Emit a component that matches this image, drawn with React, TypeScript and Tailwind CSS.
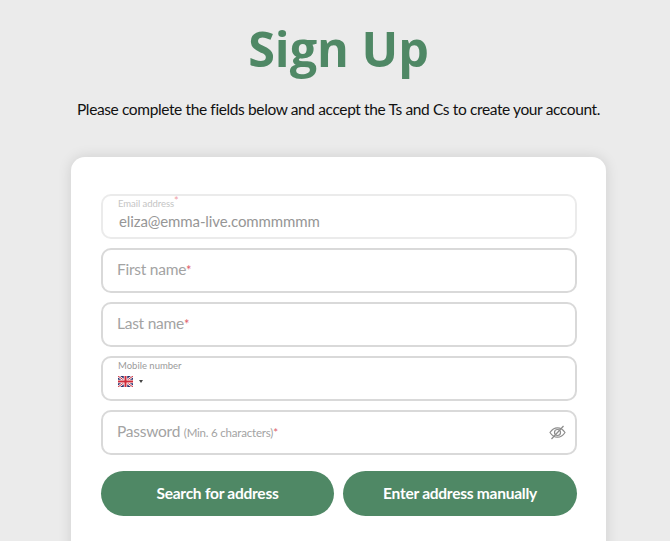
import React from "react";

function UkFlag() {
  return (
    <svg width="15" height="11" viewBox="0 0 60 44" className="block">
      <rect width="60" height="44" fill="#2b2f6b" />
      <path d="M0 0L60 44M60 0L0 44" stroke="#fff" strokeWidth="10" />
      <path d="M0 0L60 44M60 0L0 44" stroke="#cf2b3a" strokeWidth="4" />
      <path d="M30 0V44M0 22H60" stroke="#fff" strokeWidth="14" />
      <path d="M30 0V44M0 22H60" stroke="#cf2b3a" strokeWidth="8" />
    </svg>
  );
}

function EyeSlash() {
  return (
    <svg width="17" height="15" viewBox="0 0 17 15" fill="none" stroke="#8c8c8c" strokeWidth="1.2" className="block">
      <path d="M1 7.5C3 4.4 5.6 2.8 8.5 2.8S14 4.4 16 7.5C14 10.6 11.4 12.2 8.5 12.2S3 10.6 1 7.5Z" />
      <circle cx="8.5" cy="7.5" r="3" />
      <path d="M2.5 14L14.5 1" />
    </svg>
  );
}

const fieldCls =
  "relative h-[45px] rounded-[10px] border-2 border-[#d9d9d9] bg-white";

const inputText = "text-[15.5px] tracking-[-0.25px] text-[#a3a3a3]";

function PlainField({ label }: { label: string }) {
  return (
    <div className={`${fieldCls} flex items-center pb-[2px] pl-[14px]`}>
      <span className={inputText}>
        {label}
        <span className="text-[13px] text-[#e0606c]">*</span>
      </span>
    </div>
  );
}

export default function App() {
  return (
    <div className="h-[541px] overflow-hidden bg-[#ebebeb] font-['Lato',sans-serif]">
      <div className="ml-[71px] w-[535px]">
        <h1 className="pt-[17px] text-center font-['Open_Sans',sans-serif] text-[48.5px] font-bold leading-[62px] text-[#4f8865]">
          Sign Up
        </h1>
        <p className="mt-[18px] whitespace-nowrap text-center text-[15.5px] leading-[24px] tracking-[-0.38px] text-[#111111]">
          Please complete the fields below and accept the Ts and Cs to create your account.
        </p>
      </div>
      <div className="ml-[71px] mt-[36px] w-[535px] rounded-t-[14px] bg-white pb-[40px] pl-[30px] pr-[29px] pt-[37px] shadow-[0_0_14px_rgba(0,0,0,0.12)]">
        <div className="flex flex-col gap-[9px]">
          <div className="relative h-[45px] rounded-[10px] border-2 border-[#ebebeb] bg-white pl-[16px]">
            <div className="mt-[1px] text-[9.5px] leading-[12px] tracking-[-0.05px] text-[#c4c4c4]">
              <span className="-ml-[1px]">Email address</span>
              <span className="relative top-[-2px] text-[11px] text-[#f0a0a8]">*</span>
            </div>
            <div className="mt-[1px] text-[15px] leading-[20px] tracking-[-0.1px] text-[#969696]">
              eliza@emma-live.commmmmm
            </div>
          </div>
          <PlainField label="First name" />
          <PlainField label="Last name" />
          <div className={`${fieldCls} pl-[15px]`}>
            <div className="mt-[2px] text-[9.5px] leading-[12px] text-[#9b9b9b]">Mobile number</div>
            <div className="mt-[4px] flex items-center gap-[6px]">
              <UkFlag />
              <span className="h-0 w-0 border-x-[2.5px] border-t-[3px] border-x-transparent border-t-[#444]" />
            </div>
          </div>
          <div className={`${fieldCls} flex items-center justify-between pb-[1px] pl-[14px] pr-[9px]`}>
            <span className={inputText}>
              Password <span className="text-[11.5px] tracking-[-0.2px]">(Min. 6 characters)</span>
              <span className="text-[11.5px] text-[#e0606c]">*</span>
            </span>
            <EyeSlash />
          </div>
        </div>
        <div className="mt-[16px] flex gap-[9px]">
          <button className="h-[45px] w-[233px] rounded-full bg-[#4f8865] text-[15.5px] font-bold tracking-[-0.25px] text-white">
            Search for address
          </button>
          <button className="h-[45px] flex-1 rounded-full bg-[#4f8865] text-[15.5px] font-bold tracking-[-0.25px] text-white">
            Enter address manually
          </button>
        </div>
      </div>
    </div>
  );
}
